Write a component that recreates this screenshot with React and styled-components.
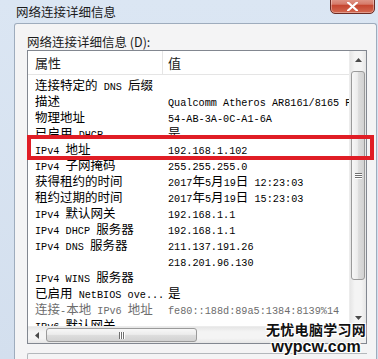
import { createGlobalStyle, styled } from "styled-components";

const GlobalStyle = createGlobalStyle`
  html, body {
    margin: 0;
    padding: 0;
  }
  body {
    width: 378px;
    height: 359px;
    overflow: hidden;
    background: #d3dfed;
    font-family: "Noto Sans CJK SC", sans-serif;
  }
  * {
    box-sizing: border-box;
  }
`;

const Window = styled.div`
  position: relative;
  width: 378px;
  height: 359px;
  display: flex;
  flex-direction: column;
  background: linear-gradient(180deg, #dbe6f3 0%, #d3dfee 100%);
`;

const TitleBar = styled.div`
  height: 23px;
  flex: none;
  display: flex;
  justify-content: space-between;
  align-items: flex-start;
  padding: 0 3px 0 16px;
`;

const Title = styled.span`
  line-height: 23px;
  font-size: 12.5px;
  color: #1b1b1b;
`;

const CloseButton = styled.div`
  width: 45px;
  height: 18px;
  margin-top: -4px;
  display: flex;
  align-items: center;
  justify-content: center;
  padding-top: 3px;
  border: 1px solid #6b2b24;
  border-radius: 0 0 5px 5px;
  background: linear-gradient(180deg, #e4a699 0%, #d67a69 45%, #c54630 52%, #d46a52 100%);
  box-shadow: inset 0 0 0 1px rgba(255, 255, 255, 0.35);
`;

const Frame = styled.div`
  flex: 1;
  display: flex;
  padding: 0 1px 0 14px;
`;

const Panel = styled.div`
  flex: 1;
  display: flex;
  flex-direction: column;
  padding: 10px 9px 0 12px;
  border: 1px solid #9eacbd;
  border-bottom: none;
  border-radius: 3px 3px 0 0;
  background: #f4f4f5;
`;

const Label = styled.div`
  height: 16px;
  line-height: 16px;
  font-size: 12.5px;
  color: #1b1b1b;
  white-space: nowrap;
`;

const ListBox = styled.div`
  position: relative;
  height: 294px;
  flex: none;
  border: 1px solid #828790;
  background: #ffffff;
  display: grid;
  grid-template-columns: 1fr 17px;
  grid-template-rows: 1fr 17px;
`;

const Content = styled.div`
  overflow: hidden;
  min-width: 0;
`;

const Header = styled.div`
  height: 24px;
  display: flex;
  align-items: center;
  border-bottom: 1px solid #e5e5e5;
`;

const HeaderCell = styled.div`
  width: ${p => (p.$first ? "135px" : "auto")};
  flex: ${p => (p.$first ? "none" : "1")};
  height: 100%;
  display: flex;
  align-items: center;
  padding-left: ${p => (p.$first ? "7px" : "5px")};
  border-right: ${p => (p.$first ? "1px solid #e5e5e5" : "none")};
  font-size: 13px;
  color: #1b1b1b;
`;

const Row = styled.div`
  height: 16px;
  display: flex;
  align-items: center;
  white-space: pre;
  color: ${p => (p.$dim ? "#6d6d6d" : "#000000")};
`;

const NameCell = styled.div`
  width: 140px;
  flex: none;
  padding-left: 7px;
  overflow: hidden;
`;

const ValueCell = styled.div`
  flex: 1;
  overflow: hidden;
`;

const Han = styled.span`
  font-family: "Noto Sans CJK SC", sans-serif;
  font-size: 12.5px;
  line-height: 16px;
`;

const Latin = styled.span`
  font-family: "Liberation Mono", monospace;
  font-size: 10.2px;
  line-height: 16px;
`;

const VScroll = styled.div`
  display: flex;
  flex-direction: column;
  background: linear-gradient(90deg, #e6e6e6 0%, #f4f4f4 30%, #f4f4f4 70%, #e6e6e6 100%);
  border-left: 1px solid #ececec;
`;

const HScroll = styled.div`
  display: flex;
  background: linear-gradient(180deg, #e6e6e6 0%, #f4f4f4 30%, #f4f4f4 70%, #e6e6e6 100%);
  border-top: 1px solid #ececec;
`;

const ArrowButton = styled.div`
  width: ${p => (p.$horizontal ? "17px" : "100%")};
  height: ${p => (p.$horizontal ? "100%" : "17px")};
  flex: none;
  display: flex;
  align-items: center;
  justify-content: center;
`;

const Thumb = styled.div`
  flex: none;
  display: flex;
  align-items: center;
  justify-content: center;
  border: 1px solid #9a9a9a;
  border-radius: 3px;
  ${p =>
    p.$horizontal
      ? `width: 151px; margin: 1px 0 1px 1px;
         background: linear-gradient(180deg, #f7f7f7 0%, #ececec 45%, #dcdcdc 55%, #d2d2d2 100%);`
      : `height: 209px; margin: 3px 1px 0 1px;
         background: linear-gradient(90deg, #f7f7f7 0%, #ececec 45%, #dcdcdc 55%, #d2d2d2 100%);`}
`;

const Track = styled.div`
  flex: 1;
`;

const Grip = styled.div`
  display: flex;
  flex-direction: ${p => (p.$horizontal ? "row" : "column")};
  gap: 1px;

  span {
    display: block;
    background: #6f6f6f;
    width: ${p => (p.$horizontal ? "1px" : "7px")};
    height: ${p => (p.$horizontal ? "7px" : "1px")};
    box-shadow: ${p => (p.$horizontal ? "1px 0 0 #fff" : "0 1px 0 #fff")};
  }
`;

const Corner = styled.div`
  background: #f0f0f0;
`;

const Highlight = styled.div`
  position: absolute;
  left: -1px;
  top: 84px;
  width: 347px;
  height: 25px;
  border: 4px solid #e01d25;
  pointer-events: none;
`;

const BottomBox = styled.div`
  margin-top: 9px;
  flex: 1;
  border-top: 1px solid #b4b8bc;
  border-left: 1px solid #b4b8bc;
  border-radius: 2px 0 0 0;
`;

const Watermark = styled.div`
  position: absolute;
  left: 266px;
  top: 320px;
  display: flex;
  flex-direction: column;
  align-items: center;
  color: #111;
  font-weight: 700;
  text-shadow: -1px -1px 0 #fff, 1px -1px 0 #fff, -1px 1px 0 #fff, 1px 1px 0 #fff, 0 0 3px #fff;
`;

const WatermarkCn = styled.div`
  font-family: "Noto Sans CJK SC", sans-serif;
  font-size: 14px;
  line-height: 19px;
  letter-spacing: 0.3px;
`;

const WatermarkEn = styled.div`
  font-family: "Liberation Sans", Arial, sans-serif;
  font-size: 16px;
  line-height: 16px;
`;

const CJK = /([\u3000-\u9fff\uff00-\uffef]+)/;

function Mixed({ text }) {
  return text
    .split(CJK)
    .filter(Boolean)
    .map((part, i) =>
      CJK.test(part) ? <Han key={i}>{part}</Han> : <Latin key={i}>{part}</Latin>
    );
}

const rows = [
  ["连接特定的 DNS 后缀", ""],
  ["描述", "Qualcomm Atheros AR8161/8165 PCI-E Gigabit Ethernet Controller"],
  ["物理地址", "54-AB-3A-0C-A1-6A"],
  ["已启用 DHCP", "是"],
  ["IPv4 地址", "192.168.1.102"],
  ["IPv4 子网掩码", "255.255.255.0"],
  ["获得租约的时间", "2017年5月19日 12:23:03"],
  ["租约过期的时间", "2017年5月19日 15:23:03"],
  ["IPv4 默认网关", "192.168.1.1"],
  ["IPv4 DHCP 服务器", "192.168.1.1"],
  ["IPv4 DNS 服务器", "211.137.191.26"],
  ["", "218.201.96.130"],
  ["IPv4 WINS 服务器", ""],
  ["已启用 NetBIOS ove...", "是"],
  ["连接-本地 IPv6 地址", "fe80::188d:89a5:1384:8139%14", true],
  ["IPv6 默认网关", ""],
];

function Arrow({ dir }) {
  const points = {
    up: "0,4 3.5,0 7,4",
    down: "0,0 3.5,4 7,0",
    left: "4,0 0,3.5 4,7",
  }[dir];
  const size = dir === "left" ? { w: 4, h: 7 } : { w: 7, h: 4 };
  return (
    <svg width={size.w} height={size.h} viewBox={`0 0 ${size.w} ${size.h}`}>
      <polygon points={points} fill="#4a4a4a" />
    </svg>
  );
}

function CloseIcon() {
  return (
    <svg width="11" height="9" viewBox="0 0 11 9">
      <path d="M1 0.5 L10 8.5 M10 0.5 L1 8.5" stroke="#ffffff" strokeWidth="2.2" strokeLinecap="square" />
    </svg>
  );
}

export default function App() {
  return (
    <>
      <GlobalStyle />
      <Window>
        <TitleBar>
          <Title>网络连接详细信息</Title>
          <CloseButton>
            <CloseIcon />
          </CloseButton>
        </TitleBar>
        <Frame>
          <Panel>
            <Label>网络连接详细信息 (D):</Label>
            <ListBox>
              <Content>
                <Header>
                  <HeaderCell $first>属性</HeaderCell>
                  <HeaderCell>值</HeaderCell>
                </Header>
                {rows.map(([name, value, dim], i) => (
                  <Row key={i} $dim={dim}>
                    <NameCell>
                      <Mixed text={name} />
                    </NameCell>
                    <ValueCell>
                      <Mixed text={value} />
                    </ValueCell>
                  </Row>
                ))}
              </Content>
              <VScroll>
                <ArrowButton>
                  <Arrow dir="up" />
                </ArrowButton>
                <Thumb>
                  <Grip>
                    <span />
                    <span />
                    <span />
                  </Grip>
                </Thumb>
                <Track />
                <ArrowButton>
                  <Arrow dir="down" />
                </ArrowButton>
              </VScroll>
              <HScroll>
                <ArrowButton $horizontal>
                  <Arrow dir="left" />
                </ArrowButton>
                <Thumb $horizontal>
                  <Grip $horizontal>
                    <span />
                    <span />
                    <span />
                  </Grip>
                </Thumb>
                <Track />
              </HScroll>
              <Corner />
              <Highlight />
            </ListBox>
            <BottomBox />
          </Panel>
        </Frame>
        <Watermark>
          <WatermarkCn>无忧电脑学习网</WatermarkCn>
          <WatermarkEn>wypcw.com</WatermarkEn>
        </Watermark>
      </Window>
    </>
  );
}
